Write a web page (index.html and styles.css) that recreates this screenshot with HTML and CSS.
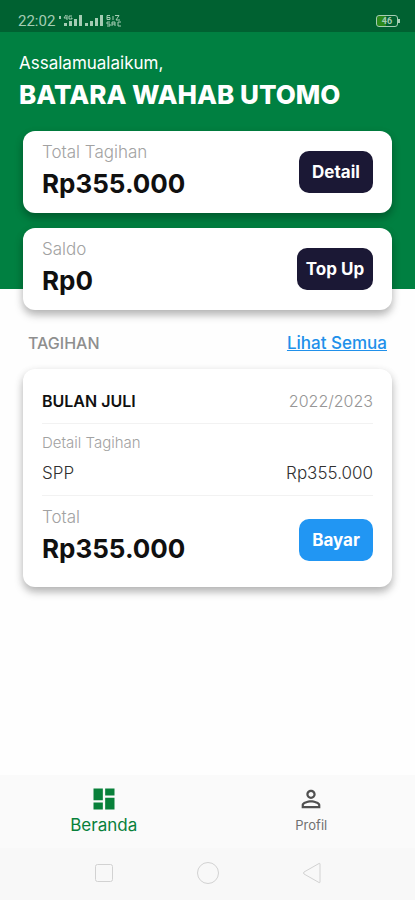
FILE: index.html
```html
<!DOCTYPE html>
<html lang="id">
<head>
<meta charset="utf-8">
<meta name="viewport" content="width=device-width, initial-scale=1">
<title>Beranda</title>
<link rel="stylesheet" href="styles.css">
</head>
<body>
<div class="statusbar">
  <div class="status-left">
    <span class="clock">22:02</span>
    <svg class="signal" width="66" height="14" viewBox="0 0 66 14" fill="currentColor" aria-hidden="true">
      <path d="M0 2h2v3H0zM5 9h3v3H5zM10 7h3v5h-3zM15 5h3v7h-3zM20 1h3v11h-3z"/>
      <path d="M7 1L5 4h3M8 1v5M13 2h-3v3h3V4h-1" fill="none" stroke="currentColor"/>
      <path d="M26 9h3v3h-3zM31 7h3v5h-3zM36 4h3v8h-3zM41 1h3v11h-3z"/>
      <path d="M51 1.500h-3v4h3v-2h-3M54 2v4M56 1.500h4L57 6h4M51 8h-3v2h3v2h-3M53 12V8h3v4M53 10h3M59 8v4h3M62 8h-3" fill="none" stroke="currentColor"/>
    </svg>
  </div>
  <div class="battery"><span class="battery-text">46</span></div>
</div>

<header class="hero">
  <p class="greeting">Assalamualaikum,</p>
  <h1 class="name">BATARA WAHAB UTOMO</h1>
  <div class="summary">
    <section class="card balance">
      <div>
        <p class="label">Total Tagihan</p>
        <p class="amount">Rp355.000</p>
      </div>
      <button class="btn" type="button">Detail</button>
    </section>
    <section class="card balance">
      <div>
        <p class="label">Saldo</p>
        <p class="amount">Rp0</p>
      </div>
      <button class="btn btn-wide" type="button">Top Up</button>
    </section>
  </div>
</header>

<main class="content">
  <div class="section-head">
    <h2 class="section-title">TAGIHAN</h2>
    <a class="see-all" href="#">Lihat Semua</a>
  </div>
  <article class="card bill">
    <div class="row bill-head">
      <h3 class="month">BULAN JULI</h3>
      <span class="year">2022/2023</span>
    </div>
    <div class="bill-detail">
      <p class="label label-small">Detail Tagihan</p>
      <div class="row item"><span>SPP</span><span>Rp355.000</span></div>
    </div>
    <div class="row bill-total">
      <div>
        <p class="label">Total</p>
        <p class="amount">Rp355.000</p>
      </div>
      <button class="btn btn-pay" type="button">Bayar</button>
    </div>
  </article>
</main>

<nav class="tabs">
  <a class="tab tab-active" href="#">
    <svg width="28" height="28" viewBox="0 0 24 24" fill="currentColor" aria-hidden="true"><path d="M3 13h8V3H3v10zm0 8h8v-6H3v6zm10 0h8V11h-8v10zm0-18v6h8V3h-8z"/></svg>
    <span>Beranda</span>
  </a>
  <a class="tab" href="#">
    <svg width="28" height="28" viewBox="0 0 24 24" fill="currentColor" aria-hidden="true"><path d="M12 5.900c1.160 0 2.100.94 2.100 2.100s-.94 2.100-2.100 2.100S9.900 9.160 9.900 8s.94-2.100 2.100-2.100m0 9c2.970 0 6.100 1.460 6.100 2.100v1.100H5.900V17c0-.64 3.130-2.100 6.100-2.100M12 4C9.790 4 8 5.790 8 8s1.790 4 4 4 4-1.790 4-4-1.790-4-4-4zm0 9c-2.670 0-8 1.340-8 4v3h16v-3c0-2.660-5.330-4-8-4z"/></svg>
    <span>Profil</span>
  </a>
</nav>
<div class="sysnav">
  <button class="sys" type="button" aria-label="Recent"><svg width="24" height="24" viewBox="0 0 24 24"><rect x="3.500" y="3.500" width="17" height="17" rx="2"/></svg></button>
  <button class="sys" type="button" aria-label="Home"><svg width="24" height="24" viewBox="0 0 24 24"><circle cx="12" cy="12" r="10.500"/></svg></button>
  <button class="sys" type="button" aria-label="Back"><svg width="24" height="24" viewBox="0 0 24 24"><path d="M20 3v18q0 1-1 .5L4 13q-1-1 0-2L19 2.500q1-.5 1 .5z"/></svg></button>
</div>
</body>
</html>
```
FILE: styles.css
```css
* { box-sizing: border-box; }

body {
  margin: 0;
  min-height: 100vh;
  display: flex;
  flex-direction: column;
  background: #fefefe;
  color: #101010;
  font-family: Inter, "Open Sans", sans-serif;
  font-size: 17px;
  line-height: 24px;
}

h1, h2, h3, p { margin: 0; }
a { color: inherit; text-decoration: none; }
svg { display: block; }

.statusbar {
  display: flex;
  justify-content: space-between;
  align-items: center;
  height: 32px;
  padding: 10px 17px 0 18px;
  background: #006131;
  color: #a5cdb4;
}
.status-left { display: flex; align-items: center; gap: 4px; }
.clock { font-family: Roboto, sans-serif; font-size: 15px; line-height: 20px; }
.battery {
  position: relative;
  width: 22px;
  height: 12px;
  border: 1px solid #a5cdb4;
  border-radius: 3px;
  background: linear-gradient(90deg, #2c8a1c 45%, transparent 45%);
  font: 700 9px/10px Roboto, sans-serif;
  text-align: center;
}
.battery::after {
  content: "";
  position: absolute;
  right: -3px;
  top: 3px;
  width: 2px;
  height: 4px;
  background: #a5cdb4;
}

.hero {
  padding: 19px 19px 0;
  background: #008041;
  color: #fff;
}
.name { font-size: 26px; font-weight: 800; line-height: 40px; white-space: nowrap; }
.summary {
  display: flex;
  flex-direction: column;
  gap: 15px;
  margin: 16px 4px -21px;
}

.card {
  border-radius: 12px;
  background: #fff;
  color: #101010;
  box-shadow: 0 5px 8px rgba(0, 0, 0, 0.26), 0 2px 10px rgba(0, 0, 0, 0.07);
}
.balance, .row {
  display: flex;
  justify-content: space-between;
  align-items: center;
}
.balance { padding: 9px 19px; }
.label { color: #a2a2a2; font-weight: 300; }
.label-small { font-size: 15px; }
.amount { font-size: 26px; font-weight: 700; line-height: 40px; }

.btn {
  min-width: 74px;
  height: 42px;
  padding: 0;
  border: 0;
  border-radius: 10px;
  background: #1b1835;
  color: #fff;
  font: 700 17px/24px Inter, "Open Sans", sans-serif;
}
.btn-wide { min-width: 76px; }
.btn-pay { margin-top: 6px; background: #2196f3; }

.content { flex: 1; padding: 42px 23px 24px; }
.section-head {
  display: flex;
  justify-content: space-between;
  margin-bottom: 14px;
  padding: 0 5px;
}
.section-title { color: #8e8e8e; font-size: 16px; font-weight: 500; line-height: 24px; }
.see-all {
  color: #2090ea;
  font-weight: 500;
  text-decoration: underline;
  text-decoration-thickness: 1px;
}

.bill { padding: 20px 19px 18px; }
.bill-head { padding-bottom: 10px; }
.month { font-size: 16px; font-weight: 600; }
.year { color: #969696; font-size: 16px; font-weight: 300; }
.bill-detail {
  padding: 7px 0 10px;
  border: solid #f2f2f2;
  border-width: 1px 0;
}
.item { margin-top: 6px; color: #303030; }
.item { font-weight: 300; }
.bill-total { padding-top: 9px; }

.tabs {
  display: flex;
  height: 73px;
  background: #fafafa;
}
.tab {
  flex: 1;
  display: flex;
  flex-direction: column;
  align-items: center;
  padding-top: 10px;
  color: #707070;
  font-size: 13px;
}
.tab svg { width: 28px; height: 28px; color: #505050; }
.tab-active { color: #08803a; font-size: 17px; }
.tab-active svg { color: #08803a; }

.sysnav {
  display: flex;
  justify-content: center;
  align-items: center;
  gap: 80px;
  height: 52px;
  padding-bottom: 2px;
  background: #f8f8f8;
}
.sys { padding: 0; border: 0; background: none; }
.sys svg { fill: none; stroke: #d2d2d2; stroke-width: 1; }
```
